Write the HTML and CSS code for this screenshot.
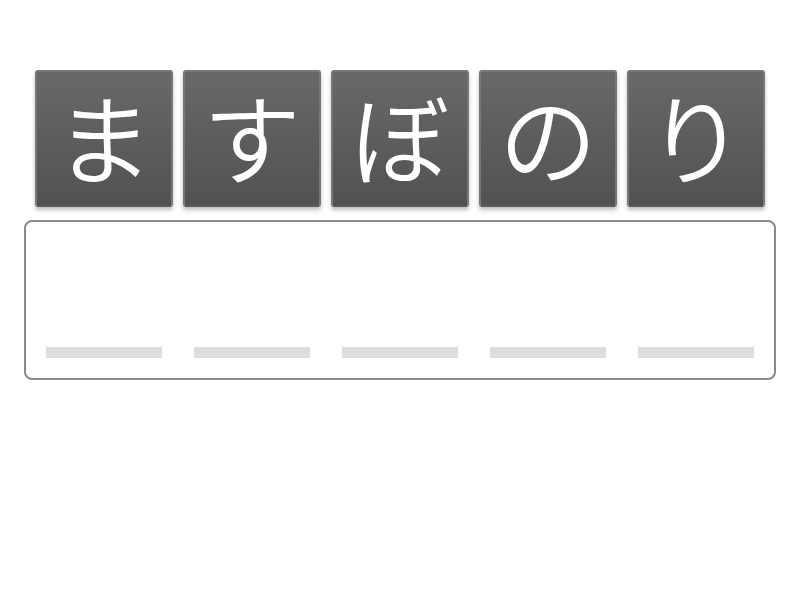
FILE: index.html
```html
<!DOCTYPE html>
<html lang="ja">
<head>
<meta charset="utf-8">
<link rel="stylesheet" href="styles.css">
</head>
<body>
<div class="page">
  <div class="tiles">
    <div class="tile">ま</div>
    <div class="tile">す</div>
    <div class="tile">ぼ</div>
    <div class="tile">の</div>
    <div class="tile">り</div>
  </div>
  <div class="answer">
    <div class="slot"></div>
    <div class="slot"></div>
    <div class="slot"></div>
    <div class="slot"></div>
    <div class="slot"></div>
  </div>
</div>
</body>
</html>
```
FILE: styles.css
```css
html, body {
  margin: 0;
  padding: 0;
  background: #fff;
}
.page {
  width: 800px;
  height: 600px;
  padding-top: 70px;
  box-sizing: border-box;
}
.tiles {
  display: flex;
  gap: 10px;
  padding-left: 35px;
}
.tile {
  width: 138px;
  height: 137px;
  box-sizing: border-box;
  border: 2px solid #777777;
  border-bottom-color: #5a5a5a;
  border-radius: 3px;
  background: linear-gradient(#686868, #525252);
  box-shadow: 0 3px 4px rgba(0,0,0,0.25);
  color: #fff;
  font-family: "Noto Sans CJK JP", sans-serif;
  font-weight: 350;
  font-size: 98px;
  line-height: 124px;
  text-align: center;
}
.answer {
  margin: 13px 0 0 24px;
  width: 752px;
  height: 160px;
  box-sizing: border-box;
  border: 2px solid #8a8a8a;
  border-radius: 8px;
  display: flex;
  align-items: flex-end;
  gap: 32px;
  padding: 0 0 20px 20px;
}
.slot {
  width: 116px;
  height: 11px;
  background: #dddddd;
}
```
